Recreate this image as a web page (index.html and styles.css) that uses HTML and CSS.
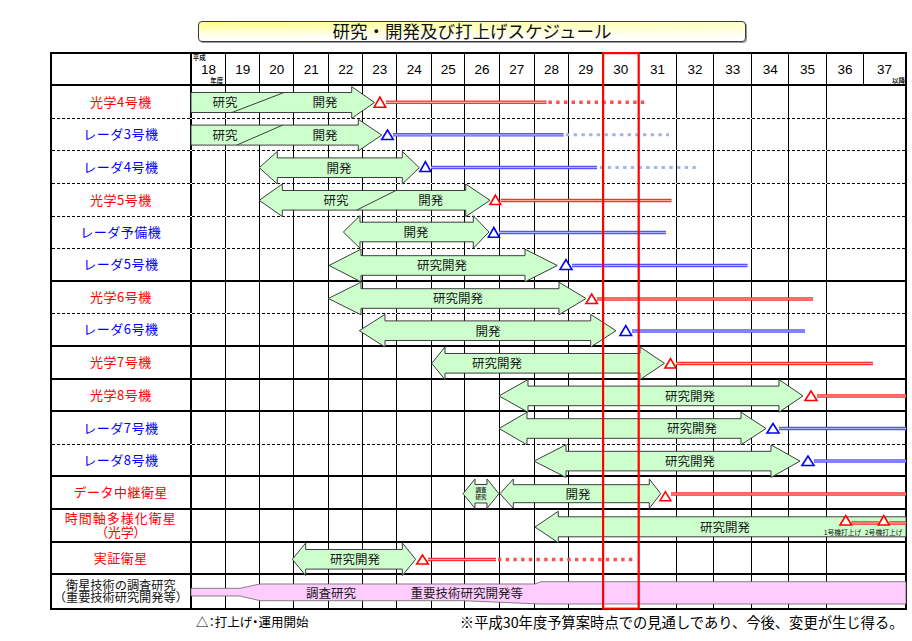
FILE: index.html
```html
<!DOCTYPE html>
<html lang="ja">
<head>
<meta charset="utf-8">
<title>研究・開発及び打上げスケジュール</title>
<link rel="stylesheet" href="styles.css">
</head>
<body>
<div class="top"><div class="title">研究・開発及び打上げスケジュール</div></div>
<div class="chart">
  <div class="hd">
    <div class="lbl"></div>
    <div class="yr y18"><span class="sm">平成</span><span>18</span><span class="sm">年度</span></div>
    <div class="yr">19</div><div class="yr">20</div><div class="yr">21</div><div class="yr">22</div><div class="yr">23</div><div class="yr">24</div><div class="yr">25</div><div class="yr">26</div><div class="yr">27</div><div class="yr">28</div><div class="yr">29</div><div class="yr">30</div><div class="yr">31</div><div class="yr">32</div><div class="yr">33</div><div class="yr">34</div><div class="yr">35</div><div class="yr">36</div>
    <div class="yr y37"><span class="sm"></span><span>37</span><span class="sm">以降</span></div>
  </div>
  <div class="row d"><div class="lbl red">光学4号機</div><i></i><i></i><i></i><i></i><i></i><i></i><i></i><i></i><i></i><i></i><i></i><i></i><i></i><i></i><i></i><i></i><i></i><i></i><i></i></div>
  <div class="row d"><div class="lbl blu">レーダ3号機</div><i></i><i></i><i></i><i></i><i></i><i></i><i></i><i></i><i></i><i></i><i></i><i></i><i></i><i></i><i></i><i></i><i></i><i></i><i></i></div>
  <div class="row d"><div class="lbl blu">レーダ4号機</div><i></i><i></i><i></i><i></i><i></i><i></i><i></i><i></i><i></i><i></i><i></i><i></i><i></i><i></i><i></i><i></i><i></i><i></i><i></i></div>
  <div class="row d"><div class="lbl red">光学5号機</div><i></i><i></i><i></i><i></i><i></i><i></i><i></i><i></i><i></i><i></i><i></i><i></i><i></i><i></i><i></i><i></i><i></i><i></i><i></i></div>
  <div class="row d"><div class="lbl blu">レーダ予備機</div><i></i><i></i><i></i><i></i><i></i><i></i><i></i><i></i><i></i><i></i><i></i><i></i><i></i><i></i><i></i><i></i><i></i><i></i><i></i></div>
  <div class="row s"><div class="lbl blu">レーダ5号機</div><i></i><i></i><i></i><i></i><i></i><i></i><i></i><i></i><i></i><i></i><i></i><i></i><i></i><i></i><i></i><i></i><i></i><i></i><i></i></div>
  <div class="row d"><div class="lbl red">光学6号機</div><i></i><i></i><i></i><i></i><i></i><i></i><i></i><i></i><i></i><i></i><i></i><i></i><i></i><i></i><i></i><i></i><i></i><i></i><i></i></div>
  <div class="row s"><div class="lbl blu">レーダ6号機</div><i></i><i></i><i></i><i></i><i></i><i></i><i></i><i></i><i></i><i></i><i></i><i></i><i></i><i></i><i></i><i></i><i></i><i></i><i></i></div>
  <div class="row s"><div class="lbl red">光学7号機</div><i></i><i></i><i></i><i></i><i></i><i></i><i></i><i></i><i></i><i></i><i></i><i></i><i></i><i></i><i></i><i></i><i></i><i></i><i></i></div>
  <div class="row s"><div class="lbl red">光学8号機</div><i></i><i></i><i></i><i></i><i></i><i></i><i></i><i></i><i></i><i></i><i></i><i></i><i></i><i></i><i></i><i></i><i></i><i></i><i></i></div>
  <div class="row d"><div class="lbl blu">レーダ7号機</div><i></i><i></i><i></i><i></i><i></i><i></i><i></i><i></i><i></i><i></i><i></i><i></i><i></i><i></i><i></i><i></i><i></i><i></i><i></i></div>
  <div class="row s"><div class="lbl blu">レーダ8号機</div><i></i><i></i><i></i><i></i><i></i><i></i><i></i><i></i><i></i><i></i><i></i><i></i><i></i><i></i><i></i><i></i><i></i><i></i><i></i></div>
  <div class="row s"><div class="lbl red">データ中継衛星</div><i></i><i></i><i></i><i></i><i></i><i></i><i></i><i></i><i></i><i></i><i></i><i></i><i></i><i></i><i></i><i></i><i></i><i></i><i></i></div>
  <div class="row s"><div class="lbl red two"><span class="l1">時間軸多様化衛星</span><span class="pal">（光学）</span></div><i></i><i></i><i></i><i></i><i></i><i></i><i></i><i></i><i></i><i></i><i></i><i></i><i></i><i></i><i></i><i></i><i></i><i></i><i></i></div>
  <div class="row s"><div class="lbl red">実証衛星</div><i></i><i></i><i></i><i></i><i></i><i></i><i></i><i></i><i></i><i></i><i></i><i></i><i></i><i></i><i></i><i></i><i></i><i></i><i></i></div>
  <div class="row"><div class="lbl blk tech"><span>衛星技術の調査研究</span><span>（重要技術研究開発等）</span></div><i></i><i></i><i></i><i></i><i></i><i></i><i></i><i></i><i></i><i></i><i></i><i></i><i></i><i></i><i></i><i></i><i></i><i></i><i></i></div>

  <svg class="ov" viewBox="50 52 857 557.8" xmlns="http://www.w3.org/2000/svg">
    <g class="ar">
      <polygon points="191,92.5 351.7,92.5 351.7,86.7 374.5,102.5 351.7,118.3 351.7,112.5 191,112.5"/>
      <polygon points="191,125.1 358.3,125.1 358.3,119.3 381.7,135.1 358.3,150.9 358.3,145.1 191,145.1"/>
      <polygon points="259.3,167.7 277.3,151.4 277.3,157.9 402.3,157.9 402.3,151.4 419.3,167.7 402.3,184 402.3,177.5 277.3,177.5 277.3,184"/>
      <polygon points="259.3,200.3 282.3,184 282.3,190.5 465.7,190.5 465.7,184 490,200.3 465.7,216.6 465.7,210.1 282.3,210.1 282.3,216.6"/>
      <polygon points="343.3,232 360,215.7 360,222.2 473.3,222.2 473.3,215.7 489,232 473.3,248.3 473.3,241.8 360,241.8 360,248.3"/>
      <polygon points="329,265.5 361,249.2 361,255.7 525,255.7 525,249.2 557.3,265.5 525,281.8 525,275.3 361,275.3 361,281.8"/>
      <polygon points="328.3,298.5 361,282.2 361,288.7 559,288.7 559,282.2 586,298.5 559,314.8 559,308.3 361,308.3 361,314.8"/>
      <polygon points="359.3,330.7 385,314.4 385,320.9 590.7,320.9 590.7,314.4 616,330.7 590.7,347 590.7,340.5 385,340.5 385,347"/>
      <polygon points="431.7,363.3 445,347 445,353.5 640,353.5 640,347 664.5,363.3 640,379.6 640,373.1 445,373.1 445,379.6"/>
      <polygon points="499,395.9 528,379.6 528,386.1 779,386.1 779,379.6 803,395.9 779,412.2 779,405.7 528,405.7 528,412.2"/>
      <polygon points="499,428.5 527,412.2 527,418.7 741,418.7 741,412.2 766,428.5 741,444.8 741,438.3 527,438.3 527,444.8"/>
      <polygon points="534,461.1 566,444.8 566,451.3 771,451.3 771,444.8 800,461.1 771,477.4 771,470.9 566,470.9 566,477.4"/>
      <polygon points="463,493.7 475,479 475,484.5 487,484.5 487,479 499,493.7 487,508.4 487,503 475,503 475,508.4"/>
      <polygon points="500,493.7 513.3,479 513.3,484.7 649.3,484.7 649.3,479 660.7,493.7 649.3,508.4 649.3,502.7 513.3,502.7 513.3,508.4"/>
      <polygon points="535,527 558.3,511.3 558.3,516.8 906,516.8 906,536.8 558.3,536.8 558.3,542.7"/>
      <polygon points="292.3,559.3 305.7,543 305.7,549.5 402.3,549.5 402.3,543 415.7,559.3 402.3,575.6 402.3,569.1 305.7,569.1 305.7,575.6"/>
    </g>
    <polygon class="pk" points="191,588.3 240,588.3 260,584 535,584 541,581.7 906,581.7 906,604 540,604 463,600.7 260,600.7 240,596 191,596"/>
    <g class="dg">
      <line x1="232" y1="112.5" x2="284" y2="92.5"/>
      <line x1="236.7" y1="145.1" x2="282.7" y2="125.1"/>
      <line x1="356.7" y1="210.1" x2="396" y2="190.5"/>
    </g>
    <g class="bt">
      <text x="225" y="102.5">研究</text><text x="325" y="102.5">開発</text>
      <text x="225" y="135">研究</text><text x="325" y="135">開発</text>
      <text x="339" y="168">開発</text>
      <text x="336" y="200.5">研究</text><text x="430.7" y="200.5">開発</text>
      <text x="416" y="232">開発</text>
      <text x="442" y="265.5">研究開発</text>
      <text x="458" y="298.5">研究開発</text>
      <text x="488" y="330.7">開発</text>
      <text x="497" y="363.3">研究開発</text>
      <text x="690" y="396">研究開発</text>
      <text x="692" y="428.5">研究開発</text>
      <text x="690" y="461">研究開発</text>
      <text x="578" y="494">開発</text>
      <text x="725" y="527">研究開発</text>
      <text x="355" y="559.3">研究開発</text>
      <text x="331" y="592.7">調査研究</text>
      <text x="466.7" y="592.7">重要技術研究開発等</text>
    </g>
    <g class="tiny">
      <text x="481" y="490">調査</text>
      <text x="481" y="497.5">研究</text>
    </g>
    <g class="note">
      <text x="842.5" y="532.5">1号機打上げ</text>
      <text x="883.7" y="532.5">2号機打上げ</text>
    </g>
    <g class="rdO">
      <line x1="386" y1="102.3" x2="546.5" y2="102.3"/>
      <line x1="500.7" y1="200.5" x2="671.5" y2="200.5"/>
      <line x1="597" y1="299" x2="813" y2="299"/>
      <line x1="676" y1="363.5" x2="873" y2="363.5"/>
      <line x1="817" y1="396" x2="906" y2="396"/>
      <line x1="671" y1="494" x2="906" y2="494"/>
      <line x1="851.5" y1="523" x2="878.5" y2="523"/>
      <line x1="889.3" y1="523" x2="906" y2="523"/>
      <line x1="428" y1="559.5" x2="496" y2="559.5"/>
    </g>
    <g class="rdI">
      <line x1="386" y1="102.3" x2="546.5" y2="102.3"/>
      <line x1="500.7" y1="200.5" x2="671.5" y2="200.5"/>
      <line x1="597" y1="299" x2="813" y2="299"/>
      <line x1="676" y1="363.5" x2="873" y2="363.5"/>
      <line x1="817" y1="396" x2="906" y2="396"/>
      <line x1="671" y1="494" x2="906" y2="494"/>
      <line x1="851.5" y1="523" x2="878.5" y2="523"/>
      <line x1="889.3" y1="523" x2="906" y2="523"/>
      <line x1="428" y1="559.5" x2="496" y2="559.5"/>
    </g>
    <g class="blO">
      <line x1="393" y1="134.8" x2="563.5" y2="134.8"/>
      <line x1="431" y1="167.5" x2="597" y2="167.5"/>
      <line x1="499" y1="232.5" x2="666" y2="232.5"/>
      <line x1="572" y1="265.5" x2="747.5" y2="265.5"/>
      <line x1="632" y1="331" x2="805" y2="331"/>
      <line x1="779" y1="428.5" x2="906" y2="428.5"/>
      <line x1="814" y1="461" x2="906" y2="461"/>
    </g>
    <g class="blI">
      <line x1="393" y1="134.8" x2="563.5" y2="134.8"/>
      <line x1="431" y1="167.5" x2="597" y2="167.5"/>
      <line x1="499" y1="232.5" x2="666" y2="232.5"/>
      <line x1="572" y1="265.5" x2="747.5" y2="265.5"/>
      <line x1="632" y1="331" x2="805" y2="331"/>
      <line x1="779" y1="428.5" x2="906" y2="428.5"/>
      <line x1="814" y1="461" x2="906" y2="461"/>
    </g>
    <g class="rdD">
      <line x1="548.5" y1="102.3" x2="648" y2="102.3"/>
      <line x1="498" y1="559.5" x2="636" y2="559.5"/>
    </g>
    <g class="blD">
      <line x1="566" y1="134.8" x2="669" y2="134.8"/>
      <line x1="600" y1="167.5" x2="698" y2="167.5"/>
    </g>
    <g class="tr r">
      <polygon points="374,107.3 379.9,97 385.7,107.3"/>
      <polygon points="490,204.5 495.4,195 500.8,204.5"/>
      <polygon points="586,303.5 591.7,294 597.4,303.5"/>
      <polygon points="665,368 670.5,358.5 676,368"/>
      <polygon points="805,400.5 811,391 817,400.5"/>
      <polygon points="660,500.7 665.4,491.7 670.8,500.7"/>
      <polygon points="840,525 845.8,515.5 851.6,525"/>
      <polygon points="878.3,525 883.8,515.5 889.3,525"/>
      <polygon points="416.7,564 422.5,555 428.3,564"/>
    </g>
    <g class="tr b">
      <polygon points="381.7,139.5 387.5,130 393.3,139.5"/>
      <polygon points="420,171.5 425.4,161.7 430.8,171.5"/>
      <polygon points="488.3,237.3 493.8,227.5 499.3,237.3"/>
      <polygon points="560,269.5 566,259.5 572,269.5"/>
      <polygon points="620,335.5 625.8,325.5 631.6,335.5"/>
      <polygon points="767,433 773,423.5 779,433"/>
      <polygon points="802,465.5 808,456 814,465.5"/>
    </g>
    <rect class="box" x="603.1" y="53.1" width="35.6" height="555.6"/>
  </svg>
</div>
<div class="foot">
  <span class="n1">△：打上げ・運用開始</span>
  <span class="n2">※平成30年度予算案時点での見通しであり、今後、変更が生じ得る。</span>
</div>
</body>
</html>
```

FILE: styles.css
```css
* { box-sizing: border-box; }

body {
  margin: 0;
  width: 912px;
  background: #fff;
  color: #000;
  font-family: "Noto Sans CJK JP", "Noto Sans", sans-serif;
}

.top {
  padding: 20.5px 0 10.5px 198px;
}

.title {
  width: 548px;
  height: 21px;
  border: 1.5px solid #3a3a3a;
  border-radius: 4px;
  box-shadow: 1px 1px 0 #999;
  background:
    linear-gradient(to right, rgba(255,255,255,0), rgba(255,255,255,.45)),
    linear-gradient(#ffff88, #fffff2 75%, #ffffff);
  display: flex;
  align-items: center;
  justify-content: center;
  font-size: 17.5px;
  line-height: 1;
  color: #111;
}

.chart {
  --cols: 139.7px 33.5px 34px 34px 35px 34px 34px 35px 33.3px 34.3px 35px 34.4px 34.3px 35.7px 37.6px 37.4px 38px 37px 37.6px 37.4px 1fr;
  position: relative;
  margin-left: 50px;
  width: 857px;
  border: 2px solid #000;
}

.hd, .row {
  display: grid;
  grid-template-columns: var(--cols);
}

.hd {
  height: 32.2px;
  border-bottom: 2px solid #000;
}

.row { height: 32.6px; }
.row.d { border-bottom: 1px dashed #000; }
.row.s { border-bottom: 2px solid #000; }

.lbl {
  border-right: 2px solid #000;
  display: flex;
  flex-direction: column;
  align-items: center;
  justify-content: center;
  font-size: 13px;
  letter-spacing: .5px;
  line-height: 1.1;
}

.red { color: #ff0000; }
.blu { color: #0000ff; }
.blk { color: #111; }

.two { line-height: 14.3px; }
.two .l1 { letter-spacing: 1px; }
.pal { font-feature-settings: "palt"; letter-spacing: 0; }

.tech {
  font-size: 12.2px;
  letter-spacing: 0;
  line-height: 12.6px;
}

.row i { border-left: 1px solid #000; }
.row .lbl + i { border-left: 0; }

.yr {
  border-left: 1px solid #000;
  display: flex;
  align-items: center;
  justify-content: center;
  font: 13.5px "Liberation Sans", Arial, sans-serif;
}
.hd .lbl + .yr { border-left: 0; }

.y18, .y37 {
  flex-direction: column;
  justify-content: space-between;
}

.sm {
  display: block;
  height: 7px;
  font: bold 6.5px/7px "Noto Sans CJK JP", sans-serif;
  color: #222;
}
.y18 .sm:first-child { align-self: flex-start; margin-left: 1px; }
.y18 .sm:last-child { align-self: flex-end; margin-right: 2px; }
.y37 .sm:last-child { align-self: flex-end; margin-right: 0; }

.ov {
  position: absolute;
  left: -2px;
  top: -2px;
  width: 857px;
  height: 557.8px;
  overflow: visible;
  pointer-events: none;
}

.ar { fill: #ccffcc; stroke: #3c3c3c; stroke-width: 1; }
.pk { fill: #ffccff; stroke: #666; stroke-width: .8; }
.dg { stroke: #3c3c3c; stroke-width: 1; }

.bt text {
  font-family: "Noto Sans CJK JP", sans-serif;
  font-size: 12.5px;
  fill: #1a1a1a;
  text-anchor: middle;
  dominant-baseline: central;
}

.tiny text {
  font-family: "Noto Sans CJK JP", sans-serif;
  font-size: 5.5px;
  font-weight: bold;
  fill: #333;
  text-anchor: middle;
  dominant-baseline: central;
}

.note text {
  font-family: "Noto Sans CJK JP", sans-serif;
  font-size: 6.8px;
  fill: #111;
  text-anchor: middle;
  dominant-baseline: central;
}

.rdO { stroke: #ff3030; stroke-width: 3.6; }
.rdI { stroke: #ffa8a8; stroke-width: 1.2; }
.blO { stroke: #5555ff; stroke-width: 3.6; }
.blI { stroke: #b0b0ff; stroke-width: 1.2; }
.rdD { stroke: #ff5050; stroke-width: 3.4; stroke-dasharray: 3.4 4.3; }
.blD { stroke: #9fb7e6; stroke-width: 3; stroke-dasharray: 3.4 4.3; }

.tr polygon { fill: #fff; stroke-width: 1.6; stroke-linejoin: miter; }
.tr.r polygon { stroke: #ff0000; }
.tr.b polygon { stroke: #0000ff; }

.box { fill: none; stroke: #ff0000; stroke-width: 2.2; }

.foot {
  display: flex;
  justify-content: space-between;
  align-items: center;
  height: 24px;
  padding: 0 8.5px 0 196px;
}

.n1 {
  font-size: 12.5px;
  font-feature-settings: "palt";
}

.n2 {
  font-size: 14.3px;
}
```
